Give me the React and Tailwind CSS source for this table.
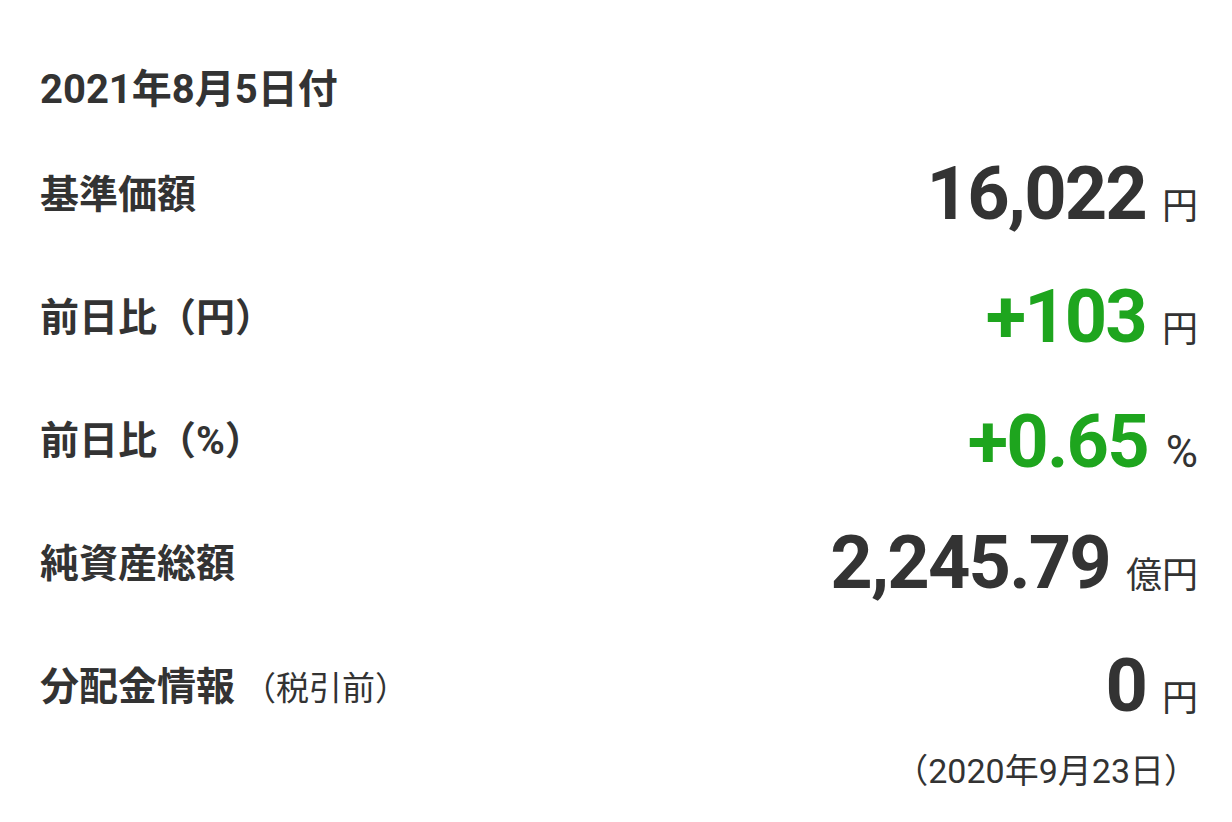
const FONT = "font-['Roboto','Noto_Sans_CJK_JP',sans-serif]";

const rows = [
  { label: "基準価額", value: "16,022", unit: "円", tone: "text-[#333333]" },
  { label: "前日比（円）", value: "+103", unit: "円", tone: "text-[#1ea51e]" },
  { label: "前日比（%）", value: "+0.65", unit: "%", tone: "text-[#1ea51e]", pct: true },
  { label: "純資産総額", value: "2,245.79", unit: "億円", tone: "text-[#333333]" },
  { label: "分配金情報", note: "（税引前）", value: "0", unit: "円", tone: "text-[#333333]" },
];

function Row({ label, note, value, unit, tone, pct }) {
  return (
    <div className="flex h-[123px] items-center justify-between">
      <div className="flex items-baseline">
        <span className="text-[39px] font-bold text-[#333333]">{label}</span>
        {note && <span className="ml-[8px] text-[33px] text-[#333333]">{note}</span>}
      </div>
      <div className="flex items-baseline">
        <span className={`text-[74px] font-bold leading-none tracking-tight ${tone}`}>{value}</span>
        <span
          className={
            pct
              ? "ml-[18px] font-['Roboto',sans-serif] text-[44px] leading-none text-[#333333]"
              : "ml-[16px] text-[36px] text-[#333333]"
          }
        >
          {unit}
        </span>
      </div>
    </div>
  );
}

export default function App() {
  return (
    <main className={`min-h-screen bg-white pl-[40px] pr-[34px] pt-[62px] ${FONT}`}>
      <h1 className="text-[40px] font-bold leading-[56px] text-[#333333]">2021年8月5日付</h1>
      <div className="mt-[16px]">
        {rows.map((r) => (
          <Row key={r.label} {...r} />
        ))}
      </div>
      <p className="text-right text-[34px] leading-[44px] text-[#333333]">（2020年9月23日）</p>
    </main>
  );
}
